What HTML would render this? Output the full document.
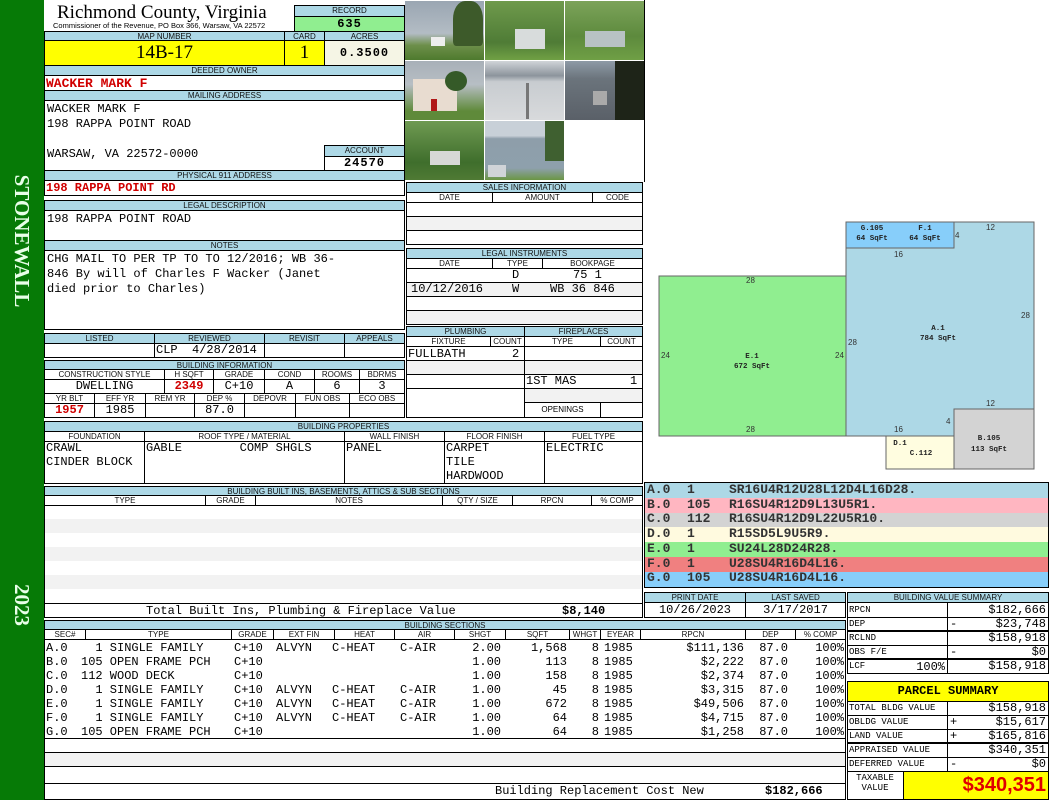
<!DOCTYPE html>
<html><head><meta charset="utf-8"><style>
*{margin:0;padding:0;box-sizing:border-box}
body{width:1050px;height:800px;position:relative;background:#fff;overflow:hidden;font-family:"Liberation Mono",monospace;font-size:12px;color:#000}
div{position:absolute}
.h{background:#add8e6;font:8px/10px "Liberation Sans",sans-serif;text-align:center;color:#111;border:1px solid #000;white-space:nowrap;overflow:hidden}
.bx{border:1px solid #000}
.m{font-family:"Liberation Mono",monospace;font-size:12px;line-height:14px;white-space:pre}
.r{text-align:right}
.c{text-align:center}
.red{color:#d00000;font-weight:bold}
.hl{height:1px;background:#000}
.vl{width:1px;background:#000}
.g{background:#f2f2f2}
.cd{font-family:"Liberation Mono",monospace;font-size:13px;line-height:14.7px;white-space:pre;font-weight:bold;color:#333}
</style></head><body>
<!-- sidebar -->
<div style="left:0;top:0;width:44px;height:800px;background:#067a06"></div>
<div style="left:8px;top:165px;width:28px;height:152px;"><div style="left:0;top:0;width:152px;height:28px;transform-origin:0 0;transform:translate(28px,0) rotate(90deg);font:bold 21px/28px 'Liberation Serif',serif;color:#e8ffe8;text-align:center">STONEWALL</div></div>
<div style="left:8px;top:583px;width:28px;height:44px;"><div style="left:0;top:0;width:44px;height:28px;transform-origin:0 0;transform:translate(28px,0) rotate(90deg);font:bold 21px/28px 'Liberation Serif',serif;color:#e8ffe8;text-align:center">2023</div></div>

<!-- header -->
<div style="left:57px;top:2px;font:19px/21px 'Liberation Serif',serif;white-space:nowrap">Richmond County, Virginia</div>
<div style="left:53px;top:21px;font:7.5px/9px 'Liberation Sans',sans-serif;white-space:nowrap">Commissioner of the Revenue, PO Box 366, Warsaw, VA 22572</div>
<div class="h" style="left:294px;top:5px;width:111px;height:12px">RECORD</div>
<div class="bx" style="left:294px;top:16px;width:111px;height:16px;background:#90ee90;font:bold 12px/14px 'Liberation Mono',monospace;text-align:center;letter-spacing:1px">635</div>
<div class="h" style="left:44px;top:31px;width:241px;height:10px">MAP NUMBER</div>
<div class="h" style="left:284px;top:31px;width:41px;height:10px">CARD</div>
<div class="h" style="left:324px;top:31px;width:81px;height:10px">ACRES</div>
<div class="bx c" style="left:44px;top:40px;width:241px;height:26px;background:#ffff00;font:19px/24px 'Liberation Serif',serif">14B-17</div>
<div class="bx c" style="left:284px;top:40px;width:41px;height:26px;background:#ffff00;font:19px/24px 'Liberation Serif',serif">1</div>
<div class="bx c" style="left:324px;top:40px;width:81px;height:26px;background:#f5f5e5;font:bold 12px/24px 'Liberation Mono',monospace;letter-spacing:1px">0.3500</div>
<div class="h" style="left:44px;top:65px;width:361px;height:11px">DEEDED OWNER</div>
<div class="bx" style="left:44px;top:75px;width:361px;height:16px"></div>
<div class="m red" style="left:46px;top:77px;font-size:13px">WACKER MARK F</div>
<div class="h" style="left:44px;top:90px;width:361px;height:11px">MAILING ADDRESS</div>
<div class="bx" style="left:44px;top:100px;width:361px;height:71px"></div>
<div class="m" style="left:47px;top:102px;line-height:15px">WACKER MARK F
198 RAPPA POINT ROAD

WARSAW, VA 22572-0000</div>
<div class="h" style="left:324px;top:145px;width:81px;height:12px">ACCOUNT</div>
<div class="bx c" style="left:324px;top:156px;width:81px;height:15px;font:bold 12px/13px 'Liberation Mono',monospace;letter-spacing:1px">24570</div>
<div class="h" style="left:44px;top:170px;width:361px;height:11px">PHYSICAL 911 ADDRESS</div>
<div class="bx" style="left:44px;top:180px;width:361px;height:16px"></div>
<div class="m red" style="left:46px;top:181px;font-size:12px">198 RAPPA POINT RD</div>
<div class="h" style="left:44px;top:200px;width:361px;height:11px">LEGAL DESCRIPTION</div>
<div class="bx" style="left:44px;top:210px;width:361px;height:31px"></div>
<div class="m" style="left:47px;top:212px">198 RAPPA POINT ROAD</div>
<div class="h" style="left:44px;top:240px;width:361px;height:11px">NOTES</div>
<div class="bx" style="left:44px;top:250px;width:361px;height:80px"></div>
<div class="m" style="left:47px;top:252px;line-height:15px">CHG MAIL TO PER TP TO TO 12/2016; WB 36-
846 By will of Charles F Wacker (Janet
died prior to Charles)</div>

<!-- listed -->
<div class="h" style="left:44px;top:333px;width:111px;height:11px">LISTED</div>
<div class="h" style="left:154px;top:333px;width:111px;height:11px">REVIEWED</div>
<div class="h" style="left:264px;top:333px;width:81px;height:11px">REVISIT</div>
<div class="h" style="left:344px;top:333px;width:61px;height:11px">APPEALS</div>
<div class="bx" style="left:44px;top:343px;width:111px;height:15px"></div>
<div class="bx" style="left:154px;top:343px;width:111px;height:15px"></div>
<div class="bx" style="left:264px;top:343px;width:81px;height:15px"></div>
<div class="bx" style="left:344px;top:343px;width:61px;height:15px"></div>
<div class="m" style="left:156px;top:343px">CLP  4/28/2014</div>
<!-- building information -->
<div class="h" style="left:44px;top:360px;width:361px;height:10px">BUILDING INFORMATION</div>
<div class="h" style="left:44px;top:369px;width:121px;height:11px;background:#fff">CONSTRUCTION STYLE</div>
<div class="h" style="left:164px;top:369px;width:50px;height:11px;background:#fff">H SQFT</div>
<div class="h" style="left:213px;top:369px;width:52px;height:11px;background:#fff">GRADE</div>
<div class="h" style="left:264px;top:369px;width:51px;height:11px;background:#fff">COND</div>
<div class="h" style="left:314px;top:369px;width:46px;height:11px;background:#fff">ROOMS</div>
<div class="h" style="left:359px;top:369px;width:46px;height:11px;background:#fff">BDRMS</div>
<div class="bx m c" style="left:44px;top:379px;width:121px;height:15px;line-height:13px">DWELLING</div>
<div class="bx m c red" style="left:164px;top:379px;width:50px;height:15px;line-height:13px">2349</div>
<div class="bx m c" style="left:213px;top:379px;width:52px;height:15px;line-height:13px">C+10</div>
<div class="bx m c" style="left:264px;top:379px;width:51px;height:15px;line-height:13px">A</div>
<div class="bx m c" style="left:314px;top:379px;width:46px;height:15px;line-height:13px">6</div>
<div class="bx m c" style="left:359px;top:379px;width:46px;height:15px;line-height:13px">3</div>
<div class="h" style="left:44px;top:393px;width:51px;height:11px;background:#fff">YR BLT</div>
<div class="h" style="left:94px;top:393px;width:52px;height:11px;background:#fff">EFF YR</div>
<div class="h" style="left:145px;top:393px;width:50px;height:11px;background:#fff">REM YR</div>
<div class="h" style="left:194px;top:393px;width:51px;height:11px;background:#fff">DEP %</div>
<div class="h" style="left:244px;top:393px;width:52px;height:11px;background:#fff">DEPOVR</div>
<div class="h" style="left:295px;top:393px;width:55px;height:11px;background:#fff">FUN OBS</div>
<div class="h" style="left:349px;top:393px;width:56px;height:11px;background:#fff">ECO OBS</div>
<div class="bx m c red" style="left:44px;top:403px;width:51px;height:15px;line-height:13px">1957</div>
<div class="bx m c" style="left:94px;top:403px;width:52px;height:15px;line-height:13px">1985</div>
<div class="bx" style="left:145px;top:403px;width:50px;height:15px"></div>
<div class="bx m c" style="left:194px;top:403px;width:51px;height:15px;line-height:13px">87.0</div>
<div class="bx" style="left:244px;top:403px;width:52px;height:15px"></div>
<div class="bx" style="left:295px;top:403px;width:55px;height:15px"></div>
<div class="bx" style="left:349px;top:403px;width:56px;height:15px"></div>

<!-- photos -->
<div style="left:405px;top:1px;width:79px;height:59px;background:linear-gradient(#9aa6b2 0,#b3bcc4 55%,#6d8f4a 75%,#4e7a2e 100%)"><div style="left:48px;top:0;width:30px;height:45px;background:#3d5a2a;border-radius:40% 40% 10% 10%"></div><div style="left:26px;top:36px;width:14px;height:9px;background:#eee"></div></div>
<div style="left:485px;top:1px;width:79px;height:59px;background:linear-gradient(#6f9a4c,#4f7c36 70%,#70a044)"><div style="left:30px;top:28px;width:30px;height:20px;background:#d8dcdc"></div></div>
<div style="left:565px;top:1px;width:79px;height:59px;background:linear-gradient(#7ca35a,#5d8a3d 60%,#6f9f45)"><div style="left:20px;top:30px;width:40px;height:16px;background:#b8c2c4"></div></div>
<div style="left:405px;top:61px;width:79px;height:59px;background:linear-gradient(#a8b0b8 0,#b7bec4 40%,#5f8a3a 85%)"><div style="left:8px;top:18px;width:44px;height:32px;background:#e8dcd0"></div><div style="left:26px;top:38px;width:6px;height:12px;background:#b01818"></div><div style="left:40px;top:10px;width:22px;height:20px;background:#355a28;border-radius:50%"></div></div>
<div style="left:485px;top:61px;width:79px;height:59px;background:linear-gradient(#d0d4d8 0,#8c949c 25%,#c8ccd0 35%,#d8dadc 100%)"><div style="left:41px;top:22px;width:3px;height:36px;background:#777"></div></div>
<div style="left:565px;top:61px;width:79px;height:59px;background:linear-gradient(#8e9aa6 0,#6b747c 30%,#5a6068 100%)"><div style="left:50px;top:0;width:29px;height:59px;background:#1e2418"></div><div style="left:28px;top:30px;width:14px;height:14px;background:#aaa"></div></div>
<div style="left:405px;top:121px;width:79px;height:59px;background:linear-gradient(#6f9a52,#3f6e2c 70%,#4f7a34)"><div style="left:25px;top:30px;width:30px;height:14px;background:#d6d8d6"></div></div>
<div style="left:485px;top:121px;width:79px;height:59px;background:linear-gradient(#c8d0d8 0,#c8d0d8 25%,#8e9eaa 30%,#8ea0ac 80%,#6a9644 100%)"><div style="left:60px;top:0;width:19px;height:40px;background:#3f6030"></div><div style="left:3px;top:44px;width:18px;height:12px;background:#d0d4d8"></div></div>
<div class="vl" style="left:644px;top:0;height:182px"></div>

<!-- sales -->
<div class="h" style="left:406px;top:182px;width:237px;height:11px">SALES INFORMATION</div>
<div class="h" style="left:406px;top:192px;width:87px;height:11px;background:#fff">DATE</div>
<div class="h" style="left:492px;top:192px;width:101px;height:11px;background:#fff">AMOUNT</div>
<div class="h" style="left:592px;top:192px;width:51px;height:11px;background:#fff">CODE</div>
<div class="bx" style="left:406px;top:202px;width:237px;height:43px"></div>
<div class="hl" style="left:406px;top:216px;width:237px"></div>
<div class="hl" style="left:406px;top:230px;width:237px"></div>
<div class="g" style="left:407px;top:217px;width:235px;height:13px"></div>
<div class="h" style="left:406px;top:248px;width:237px;height:11px">LEGAL INSTRUMENTS</div>
<div class="h" style="left:406px;top:258px;width:87px;height:11px;background:#fff">DATE</div>
<div class="h" style="left:492px;top:258px;width:51px;height:11px;background:#fff">TYPE</div>
<div class="h" style="left:542px;top:258px;width:101px;height:11px;background:#fff">BOOKPAGE</div>
<div class="bx" style="left:406px;top:268px;width:237px;height:57px"></div>
<div class="g" style="left:407px;top:283px;width:235px;height:13px"></div>
<div class="g" style="left:407px;top:311px;width:235px;height:13px"></div>
<div class="hl" style="left:406px;top:282px;width:237px"></div>
<div class="hl" style="left:406px;top:296px;width:237px"></div>
<div class="hl" style="left:406px;top:310px;width:237px"></div>
<div class="m" style="left:512px;top:268px">D</div>
<div class="m" style="left:573px;top:268px">75 1</div>
<div class="m" style="left:411px;top:282px">10/12/2016</div>
<div class="m" style="left:512px;top:282px">W</div>
<div class="m" style="left:550px;top:282px">WB 36 846</div>

<!-- plumbing / fireplaces -->
<div class="h" style="left:406px;top:326px;width:119px;height:11px">PLUMBING</div>
<div class="h" style="left:524px;top:326px;width:119px;height:11px">FIREPLACES</div>
<div class="h" style="left:406px;top:336px;width:85px;height:11px;background:#fff">FIXTURE</div>
<div class="h" style="left:490px;top:336px;width:35px;height:11px;background:#fff">COUNT</div>
<div class="h" style="left:524px;top:336px;width:77px;height:11px;background:#fff">TYPE</div>
<div class="h" style="left:600px;top:336px;width:43px;height:11px;background:#fff">COUNT</div>
<div class="bx" style="left:406px;top:346px;width:119px;height:72px"></div>
<div class="bx" style="left:524px;top:346px;width:119px;height:72px"></div>
<div class="g" style="left:407px;top:361px;width:117px;height:13px"></div>
<div class="g" style="left:525px;top:361px;width:117px;height:13px"></div>
<div class="g" style="left:525px;top:389px;width:117px;height:13px"></div>
<div class="hl" style="left:406px;top:360px;width:237px"></div>
<div class="hl" style="left:406px;top:374px;width:237px"></div>
<div class="hl" style="left:406px;top:388px;width:237px"></div>
<div class="hl" style="left:524px;top:402px;width:119px"></div>
<div class="vl" style="left:600px;top:402px;height:16px"></div>
<div class="m" style="left:408px;top:347px">FULLBATH</div>
<div class="m" style="left:512px;top:347px">2</div>
<div class="m" style="left:526px;top:374px">1ST MAS</div>
<div class="m" style="left:630px;top:374px">1</div>
<div style="left:525px;top:403px;width:75px;font:8px/14px 'Liberation Sans',sans-serif;text-align:center">OPENINGS</div>

<!-- building properties -->
<div class="h" style="left:44px;top:421px;width:599px;height:11px">BUILDING PROPERTIES</div>
<div class="h" style="left:44px;top:431px;width:101px;height:11px;background:#fff">FOUNDATION</div>
<div class="h" style="left:144px;top:431px;width:201px;height:11px;background:#fff">ROOF TYPE / MATERIAL</div>
<div class="h" style="left:344px;top:431px;width:101px;height:11px;background:#fff">WALL FINISH</div>
<div class="h" style="left:444px;top:431px;width:101px;height:11px;background:#fff">FLOOR FINISH</div>
<div class="h" style="left:544px;top:431px;width:99px;height:11px;background:#fff">FUEL TYPE</div>
<div class="bx" style="left:44px;top:441px;width:101px;height:43px"></div>
<div class="bx" style="left:144px;top:441px;width:201px;height:43px"></div>
<div class="bx" style="left:344px;top:441px;width:101px;height:43px"></div>
<div class="bx" style="left:444px;top:441px;width:101px;height:43px"></div>
<div class="bx" style="left:544px;top:441px;width:99px;height:43px"></div>
<div class="m" style="left:46px;top:441px">CRAWL
CINDER BLOCK</div>
<div class="m" style="left:146px;top:441px">GABLE        COMP SHGLS</div>
<div class="m" style="left:346px;top:441px">PANEL</div>
<div class="m" style="left:446px;top:441px">CARPET
TILE
HARDWOOD</div>
<div class="m" style="left:546px;top:441px">ELECTRIC</div>

<!-- built ins -->
<div class="h" style="left:44px;top:486px;width:599px;height:10px">BUILDING BUILT INS, BASEMENTS, ATTICS &amp; SUB SECTIONS</div>
<div class="h" style="left:44px;top:495px;width:162px;height:11px;background:#fff">TYPE</div>
<div class="h" style="left:205px;top:495px;width:51px;height:11px;background:#fff">GRADE</div>
<div class="h" style="left:255px;top:495px;width:188px;height:11px;background:#fff">NOTES</div>
<div class="h" style="left:442px;top:495px;width:71px;height:11px;background:#fff">QTY / SIZE</div>
<div class="h" style="left:512px;top:495px;width:80px;height:11px;background:#fff">RPCN</div>
<div class="h" style="left:591px;top:495px;width:52px;height:11px;background:#fff">% COMP</div>
<div class="bx" style="left:44px;top:505px;width:599px;height:113px"></div>
<div class="g" style="left:45px;top:519px;width:597px;height:14px"></div>
<div class="g" style="left:45px;top:547px;width:597px;height:14px"></div>
<div class="g" style="left:45px;top:575px;width:597px;height:14px"></div>
<div class="hl" style="left:44px;top:603px;width:599px"></div>
<div class="m" style="left:146px;top:604px">Total Built Ins, Plumbing &amp; Fireplace Value</div>
<div class="m" style="left:562px;top:604px;font-weight:bold">$8,140</div>

<!-- building sections -->
<div class="h" style="left:44px;top:620px;width:802px;height:10px">BUILDING SECTIONS</div>
<div class="h" style="left:44px;top:629px;width:42px;height:11px;background:#fff">SEC#</div>
<div class="h" style="left:85px;top:629px;width:147px;height:11px;background:#fff">TYPE</div>
<div class="h" style="left:231px;top:629px;width:43px;height:11px;background:#fff">GRADE</div>
<div class="h" style="left:273px;top:629px;width:62px;height:11px;background:#fff">EXT FIN</div>
<div class="h" style="left:334px;top:629px;width:61px;height:11px;background:#fff">HEAT</div>
<div class="h" style="left:394px;top:629px;width:61px;height:11px;background:#fff">AIR</div>
<div class="h" style="left:454px;top:629px;width:52px;height:11px;background:#fff">SHGT</div>
<div class="h" style="left:505px;top:629px;width:65px;height:11px;background:#fff">SQFT</div>
<div class="h" style="left:569px;top:629px;width:32px;height:11px;background:#fff">WHGT</div>
<div class="h" style="left:600px;top:629px;width:41px;height:11px;background:#fff">EYEAR</div>
<div class="h" style="left:640px;top:629px;width:106px;height:11px;background:#fff">RPCN</div>
<div class="h" style="left:745px;top:629px;width:51px;height:11px;background:#fff">DEP</div>
<div class="h" style="left:795px;top:629px;width:51px;height:11px;background:#fff">% COMP</div>
<div class="bx" style="left:44px;top:639px;width:802px;height:161px"></div>
<div class="hl" style="left:44px;top:738px;width:802px"></div>
<div class="g" style="left:45px;top:752px;width:800px;height:14px"></div>
<div class="hl" style="left:44px;top:752px;width:802px"></div>
<div class="hl" style="left:44px;top:766px;width:802px"></div>
<div class="hl" style="left:44px;top:783px;width:802px"></div>
<div class="m" style="left:46px;top:641px">A.0
B.0
C.0
D.0
E.0
F.0
G.0</div>
<div class="m" style="left:81px;top:641px">  1 SINGLE FAMILY
105 OPEN FRAME PCH
112 WOOD DECK
  1 SINGLE FAMILY
  1 SINGLE FAMILY
  1 SINGLE FAMILY
105 OPEN FRAME PCH</div>
<div class="m" style="left:234px;top:641px">C+10
C+10
C+10
C+10
C+10
C+10
C+10</div>
<div class="m" style="left:276px;top:641px">ALVYN


ALVYN
ALVYN
ALVYN</div>
<div class="m" style="left:332px;top:641px">C-HEAT


C-HEAT
C-HEAT
C-HEAT</div>
<div class="m" style="left:400px;top:641px">C-AIR


C-AIR
C-AIR
C-AIR</div>
<div class="m r" style="left:440px;top:641px;width:61px">2.00
1.00
1.00
1.00
1.00
1.00
1.00</div>
<div class="m r" style="left:505px;top:641px;width:62px">1,568
113
158
45
672
64
64</div>
<div class="m r" style="left:580px;top:641px;width:19px">8
8
8
8
8
8
8</div>
<div class="m" style="left:604px;top:641px">1985
1985
1985
1985
1985
1985
1985</div>
<div class="m r" style="left:640px;top:641px;width:104px">$111,136
$2,222
$2,374
$3,315
$49,506
$4,715
$1,258</div>
<div class="m r" style="left:745px;top:641px;width:43px">87.0
87.0
87.0
87.0
87.0
87.0
87.0</div>
<div class="m r" style="left:795px;top:641px;width:49px">100%
100%
100%
100%
100%
100%
100%</div>
<div class="m" style="left:495px;top:784px">Building Replacement Cost New</div>
<div class="m" style="left:765px;top:784px;font-weight:bold">$182,666</div>

<!-- sketch -->
<svg style="position:absolute;left:0;top:0" width="1050" height="800">
<polygon points="846,222 1034,222 1034,409 954,409 954,436 846,436" fill="#add8e6" stroke="#666" stroke-width="1"/>
<rect x="846" y="222" width="108" height="26" fill="#87cefa" stroke="#666"/>
<rect x="659" y="276" width="187" height="160" fill="#90ee90" stroke="#666"/>
<rect x="954" y="409" width="80" height="60" fill="#d3d3d3" stroke="#666"/>
<rect x="886" y="436" width="68" height="33" fill="#fffde0" stroke="#666"/>
<g font-family="Liberation Sans,sans-serif" font-size="8" fill="#333">
<text x="986" y="230">12</text><text x="955" y="238">4</text><text x="894" y="257">16</text>
<text x="1021" y="318">28</text><text x="848" y="345">28</text><text x="746" y="283">28</text>
<text x="661" y="358">24</text><text x="835" y="358">24</text><text x="746" y="432">28</text>
<text x="986" y="406">12</text><text x="946" y="424">4</text><text x="894" y="432">16</text>
</g>
<g font-family="Liberation Mono,monospace" font-size="7.5" font-weight="bold" fill="#222" text-anchor="middle">
<text x="872" y="230">G.105</text><text x="872" y="240">64 SqFt</text>
<text x="925" y="230">F.1</text><text x="925" y="240">64 SqFt</text>
<text x="938" y="330">A.1</text><text x="938" y="340">784 SqFt</text>
<text x="752" y="358">E.1</text><text x="752" y="368">672 SqFt</text>
<text x="989" y="440">B.105</text><text x="989" y="451">113 SqFt</text>
<text x="900" y="445">D.1</text><text x="921" y="455">C.112</text>
</g>
</svg>

<!-- codes -->
<div class="bx" style="left:644px;top:482px;width:405px;height:106px"></div>
<div style="left:645px;top:483px;width:403px;height:15px;background:#add8e6"></div>
<div style="left:645px;top:498px;width:403px;height:15px;background:#ffb6c1"></div>
<div style="left:645px;top:513px;width:403px;height:14px;background:#d3d3d3"></div>
<div style="left:645px;top:527px;width:403px;height:15px;background:#fffadf"></div>
<div style="left:645px;top:542px;width:403px;height:15px;background:#90ee90"></div>
<div style="left:645px;top:557px;width:403px;height:15px;background:#f08080"></div>
<div style="left:645px;top:572px;width:403px;height:15px;background:#87cefa"></div>
<div class="cd" style="left:647px;top:483px">A.0
B.0
C.0
D.0
E.0
F.0
G.0</div>
<div class="cd" style="left:687px;top:483px">1
105
112
1
1
1
105</div>
<div class="cd" style="left:729px;top:483px">SR16U4R12U28L12D4L16D28.
R16SU4R12D9L13U5R1.
R16SU4R12D9L22U5R10.
R15SD5L9U5R9.
SU24L28D24R28.
U28SU4R16D4L16.
U28SU4R16D4L16.</div>

<!-- print date -->
<div class="h" style="left:644px;top:592px;width:102px;height:11px">PRINT DATE</div>
<div class="h" style="left:745px;top:592px;width:101px;height:11px">LAST SAVED</div>
<div class="bx m c" style="left:644px;top:602px;width:102px;height:16px;line-height:14px">10/26/2023</div>
<div class="bx m c" style="left:745px;top:602px;width:101px;height:16px;line-height:14px">3/17/2017</div>

<!-- building value summary -->
<div class="h" style="left:847px;top:592px;width:202px;height:11px">BUILDING VALUE SUMMARY</div>
<div class="bx" style="left:847px;top:602px;width:202px;height:72px"></div>
<div class="vl" style="left:947px;top:602px;height:72px"></div>
<div class="hl" style="left:847px;top:617px;width:202px"></div>
<div class="hl" style="left:847px;top:630px;width:202px;height:2px"></div>
<div class="hl" style="left:847px;top:645px;width:202px"></div>
<div class="hl" style="left:847px;top:658px;width:202px;height:2px"></div>
<div class="m" style="left:849px;top:603px;font-size:9px;line-height:14px">RPCN
DEP
RCLND
OBS F/E
LCF</div>
<div class="m r" style="left:870px;top:660px;width:75px">100%</div>
<div class="m" style="left:950px;top:603px">
-

-</div>
<div class="m r" style="left:950px;top:603px;width:96px">$182,666
$23,748
$158,918
$0
$158,918</div>

<!-- parcel summary -->
<div class="bx" style="left:847px;top:681px;width:202px;height:21px;background:#ffff00;font:bold 12px/19px 'Liberation Mono',monospace;text-align:center">PARCEL SUMMARY</div>
<div class="bx" style="left:847px;top:701px;width:202px;height:99px"></div>
<div class="vl" style="left:947px;top:701px;height:70px"></div>
<div class="hl" style="left:847px;top:715px;width:202px"></div>
<div class="hl" style="left:847px;top:729px;width:202px"></div>
<div class="hl" style="left:847px;top:742px;width:202px;height:2px"></div>
<div class="hl" style="left:847px;top:757px;width:202px"></div>
<div class="hl" style="left:847px;top:771px;width:202px"></div>
<div class="m" style="left:849px;top:701px;font-size:9px;line-height:14px">TOTAL BLDG VALUE
OBLDG VALUE
LAND VALUE
APPRAISED VALUE
DEFERRED VALUE</div>
<div class="m" style="left:950px;top:701px">
+
+

-</div>
<div class="m r" style="left:950px;top:701px;width:96px">$158,918
$15,617
$165,816
$340,351
$0</div>
<div class="m c" style="left:847px;top:773px;width:56px;font-size:9px;line-height:10px">TAXABLE
VALUE</div>
<div class="bx" style="left:903px;top:771px;width:146px;height:29px;background:#ffff00"></div>
<div class="r" style="left:903px;top:773px;width:143px;font:bold 20px/24px 'Liberation Sans',sans-serif;color:#e00000">$340,351</div>
</body></html>
